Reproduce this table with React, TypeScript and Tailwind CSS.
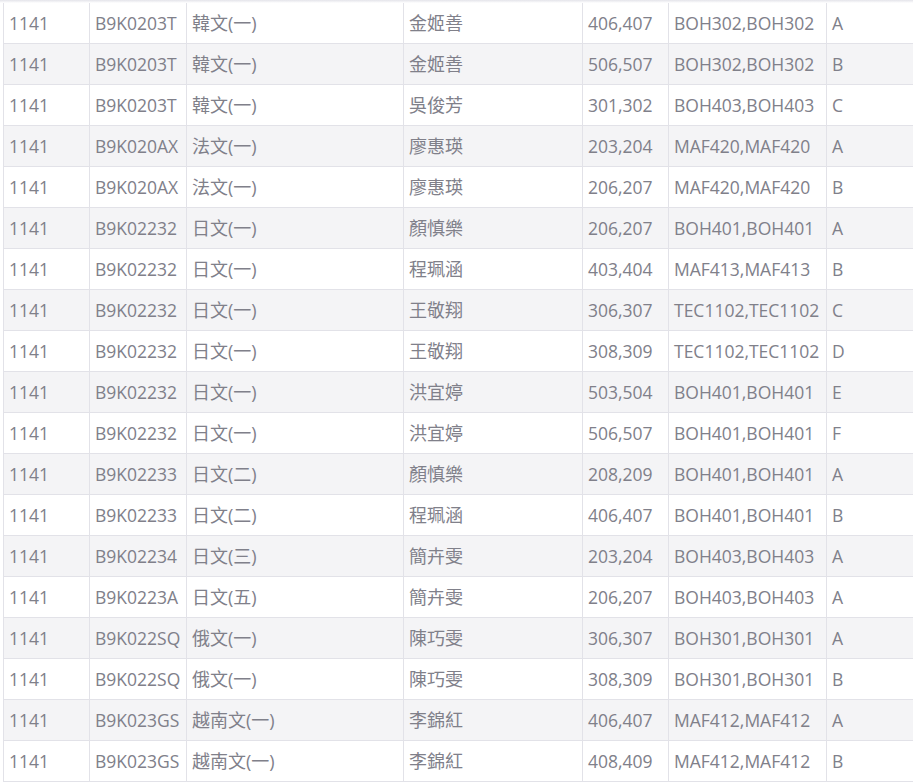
import React from "react";

const rows: string[][] = [
  ["1141", "B9K0203T", "韓文(一)", "金姬善", "406,407", "BOH302,BOH302", "A"],
  ["1141", "B9K0203T", "韓文(一)", "金姬善", "506,507", "BOH302,BOH302", "B"],
  ["1141", "B9K0203T", "韓文(一)", "吳俊芳", "301,302", "BOH403,BOH403", "C"],
  ["1141", "B9K020AX", "法文(一)", "廖惠瑛", "203,204", "MAF420,MAF420", "A"],
  ["1141", "B9K020AX", "法文(一)", "廖惠瑛", "206,207", "MAF420,MAF420", "B"],
  ["1141", "B9K02232", "日文(一)", "顏慎樂", "206,207", "BOH401,BOH401", "A"],
  ["1141", "B9K02232", "日文(一)", "程珮涵", "403,404", "MAF413,MAF413", "B"],
  ["1141", "B9K02232", "日文(一)", "王敬翔", "306,307", "TEC1102,TEC1102", "C"],
  ["1141", "B9K02232", "日文(一)", "王敬翔", "308,309", "TEC1102,TEC1102", "D"],
  ["1141", "B9K02232", "日文(一)", "洪宜婷", "503,504", "BOH401,BOH401", "E"],
  ["1141", "B9K02232", "日文(一)", "洪宜婷", "506,507", "BOH401,BOH401", "F"],
  ["1141", "B9K02233", "日文(二)", "顏慎樂", "208,209", "BOH401,BOH401", "A"],
  ["1141", "B9K02233", "日文(二)", "程珮涵", "406,407", "BOH401,BOH401", "B"],
  ["1141", "B9K02234", "日文(三)", "簡卉雯", "203,204", "BOH403,BOH403", "A"],
  ["1141", "B9K0223A", "日文(五)", "簡卉雯", "206,207", "BOH403,BOH403", "A"],
  ["1141", "B9K022SQ", "俄文(一)", "陳巧雯", "306,307", "BOH301,BOH301", "A"],
  ["1141", "B9K022SQ", "俄文(一)", "陳巧雯", "308,309", "BOH301,BOH301", "B"],
  ["1141", "B9K023GS", "越南文(一)", "李錦紅", "406,407", "MAF412,MAF412", "A"],
  ["1141", "B9K023GS", "越南文(一)", "李錦紅", "408,409", "MAF412,MAF412", "B"],
];

const widths = ["w-[86px]", "w-[97px]", "w-[217px]", "w-[179px]", "w-[86px]", "w-[158px]", "w-[120px]"];
const sizes = ["text-[17.5px]", "text-[17.5px]", "text-[18px]", "text-[18px]", "text-[17.5px]", "text-[17.5px]", "text-[17.5px]"];

export default function App() {
  return (
    <div
      className="w-[913px] h-[782px] overflow-hidden bg-white text-[#80808a]"
      style={{ fontFamily: '"Open Sans", "Noto Sans CJK TC", sans-serif' }}
    >
      <div className="h-[3px] bg-gradient-to-b from-[#e4e4ea] to-white" />
      <div className="ml-[3px] w-[1000px] border-l border-[#e2e2e8]">
        {rows.map((r, i) => (
          <div
            key={i}
            className={`flex h-[41px] border-b border-[#e2e2e8] ${i % 2 === 1 ? "bg-[#f4f4f6]" : "bg-white"}`}
          >
            {r.map((c, j) => (
              <div
                key={j}
                className={`${widths[j]} ${sizes[j]} shrink-0 flex items-center pl-[5px] pt-[1px] border-r border-[#e2e2e8] whitespace-nowrap`}
              >
                {c}
              </div>
            ))}
          </div>
        ))}
      </div>
    </div>
  );
}
